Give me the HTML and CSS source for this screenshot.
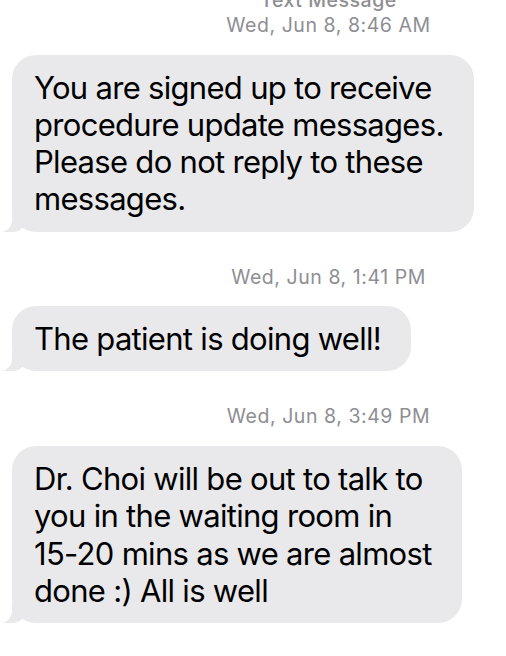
FILE: index.html
```html
<!DOCTYPE html>
<html lang="en">
  <head>
    <meta charset="UTF-8" />
    <meta name="viewport" content="width=device-width, initial-scale=1.0" />
    <title>Messages</title>
    <link rel="stylesheet" href="styles.css">
  </head>
  <body>
    <div class="thread">
      <div class="stamp stamp-first">
        <div class="service">Text Message</div>
        <div>Wed, Jun 8, 8:46 AM</div>
      </div>
      <div class="bubble">You are signed up to receive<br>procedure update messages.<br>Please do not reply to these<br>messages.</div>

      <div class="stamp">Wed, Jun 8, 1:41 PM</div>
      <div class="bubble">The patient is doing well!</div>

      <div class="stamp">Wed, Jun 8, 3:49 PM</div>
      <div class="bubble">Dr. Choi will be out to talk to<br>you in the waiting room in<br>15-20 mins as we are almost<br>done :) All is well</div>
    </div>
  </body>
</html>
```

FILE: styles.css
```css
body {
  margin: 0;
  background-color: #fff;
  overflow: hidden;
  font-family: Inter, "Liberation Sans", sans-serif;
}

/* the thread is wider than the window, the screenshot cuts its right side */
.thread {
  width: 657px;
  margin-top: -12px;
  padding: 0 12px;
  box-sizing: border-box;
  display: flex;
  flex-direction: column;
  align-items: flex-start;
}

.stamp {
  align-self: stretch;
  margin: 33px 0 16.5px;
  text-align: center;
  font-size: 19.5px;
  line-height: 25px;
  letter-spacing: 0.55px;
  color: #8e8e93;
}

.stamp-first {
  margin-top: 0;
}

.service {
  font-weight: 500;
}

.bubble {
  position: relative;
  padding: 14px 30px 14px 22px;
  border-radius: 24px;
  background-color: #e9e9eb;
  color: #000;
  font-size: 31px;
  line-height: 37.3px;
  letter-spacing: -0.7px;
  white-space: nowrap;
}

/* tail */
.bubble::before {
  content: "";
  position: absolute;
  left: -12px;
  bottom: 0;
  width: 24px;
  height: 20px;
  background-color: #e9e9eb;
  border-bottom-right-radius: 10px;
}

.bubble::after {
  content: "";
  position: absolute;
  left: -12px;
  bottom: 0;
  width: 12px;
  height: 22px;
  background-color: #fff;
  border-bottom-right-radius: 12px;
}
```
